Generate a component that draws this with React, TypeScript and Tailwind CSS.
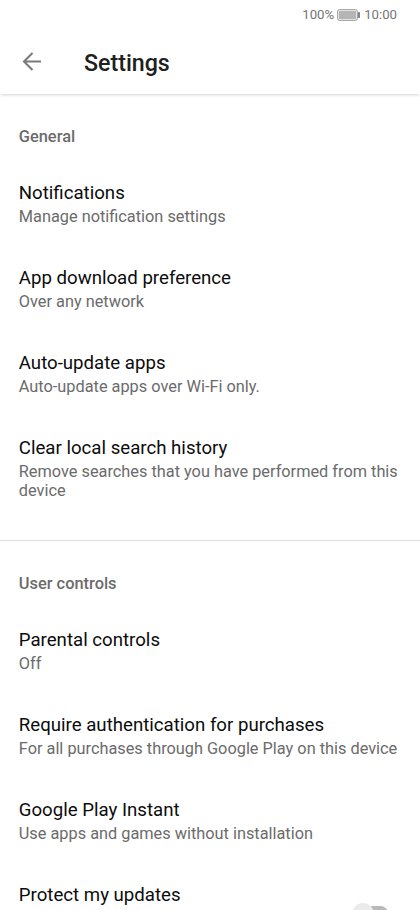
import clsx from "clsx";

type Setting = {
  title: string;
  description: string;
  toggle?: boolean;
};

const general: Setting[] = [
  { title: "Notifications", description: "Manage notification settings" },
  { title: "App download preference", description: "Over any network" },
  { title: "Auto-update apps", description: "Auto-update apps over Wi-Fi only." },
  {
    title: "Clear local search history",
    description: "Remove searches that you have performed from this device",
  },
];

const userControls: Setting[] = [
  { title: "Parental controls", description: "Off" },
  {
    title: "Require authentication for purchases",
    description: "For all purchases through Google Play on this device",
  },
  {
    title: "Google Play Instant",
    description: "Use apps and games without installation",
  },
  { title: "Protect my updates", description: "", toggle: true },
];

const StatusBar = () => (
  <div className="flex h-[30px] items-center justify-end pr-[23px] text-[13.2px] text-[#757575]">
    <span>100%</span>
    <svg className="ml-[3px] mr-[4px]" width="23" height="12" viewBox="0 0 23 12">
      <rect x="0.5" y="0.5" width="20" height="11" rx="2" fill="#e4e4e4" stroke="#a8a8a8" />
      <rect x="2" y="2" width="17" height="8" rx="0.5" fill="#b5b5b5" />
      <rect x="21" y="3" width="2" height="6" rx="0.5" fill="#858585" />
    </svg>
    <span>10:00</span>
  </div>
);

const SettingRow = ({ title, description, toggle }: Setting) => (
  <div className="flex h-[84.9px] shrink-0 items-start justify-between pl-[18.8px] pr-[15px]">
    <div>
      <h3 className="mb-[2px] text-[18.65px] leading-[24px] text-[#0c0c0c]">{title}</h3>
      <p className="text-[16.32px] leading-[19px] text-[#6b6b6b]">{description}</p>
    </div>
    {toggle && (
      <div className="mr-[17px] mt-[20px] flex items-center">
        <div className="z-10 size-[22px] rounded-full bg-[#ebebeb]" />
        <div className="-ml-[4px] h-[15px] w-[18px] rounded-r-full bg-[#b9b9b9]" />
      </div>
    )}
  </div>
);

const Section = ({ name, items, className }: { name: string; items: Setting[]; className?: string }) => (
  <section className={clsx("flex flex-col", className)}>
    <h2 className="mb-[32.2px] pl-[18.8px] text-[16.4px] font-medium leading-[24px] text-[#6b6b6b]">{name}</h2>
    {items.map((item) => (
      <SettingRow key={item.title} {...item} />
    ))}
  </section>
);

export default function App() {
  return (
    <div className="h-[910px] w-[420px] overflow-hidden bg-white font-['Roboto',sans-serif]">
      <StatusBar />
      <header className="flex h-[64px] items-center pl-[22px] shadow-[0_2px_3px_-1px_rgba(0,0,0,0.18)]">
        <svg width="20" height="20" viewBox="0 0 20 20" fill="none" stroke="#7a7a7a" strokeWidth="2.1">
          <path d="M19 9.5H2M10.5 1L2 9.5l8.5 8.5" />
        </svg>
        <h1 className="ml-[42px] pt-[3px] text-[23.2px] font-medium text-[#202020]">Settings</h1>
      </header>
      <main>
        <Section name="General" items={general} className="h-[446px] pt-[31px]" />
        <Section name="User controls" items={userControls} className="border-t border-[#dcdcdc] pt-[31px]" />
      </main>
    </div>
  );
}
